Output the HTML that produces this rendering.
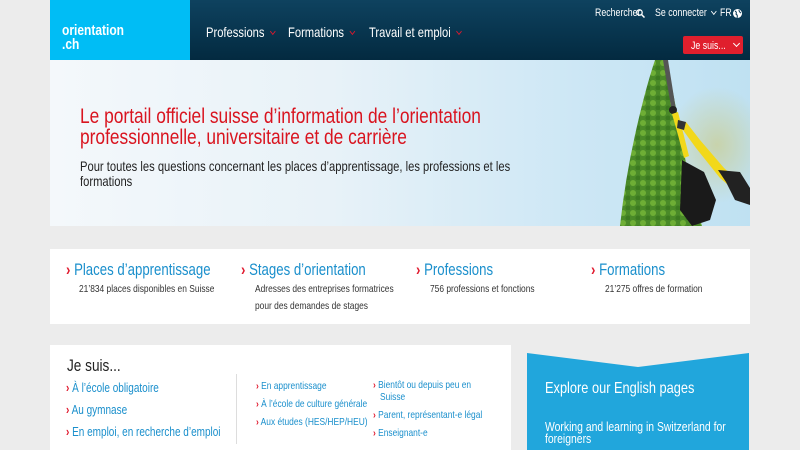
<!DOCTYPE html>
<html><head><meta charset="utf-8"><style>
*{margin:0;padding:0;box-sizing:border-box}
body{width:800px;height:450px;overflow:hidden;background:#ececec;font-family:"Liberation Sans",sans-serif;position:relative}
.abs{position:absolute}
.n{transform:scaleX(.8);transform-origin:0 0;white-space:nowrap}
.hdr{left:50px;top:0;width:700px;height:60px;background:linear-gradient(#0e425f,#032a40)}
.logo{left:50px;top:0;width:140px;height:68px;background:#00bdf5;clip-path:polygon(0 0,100% 0,100% 60px,50% 68px,0 60px)}
.logot{left:62px;top:24px;color:#fff;font-weight:bold;font-size:15px;line-height:14px}
.nav{color:#fff;font-size:14px;top:24px}
.nav i{display:inline-block;width:5px;height:5px;border-right:1.5px solid #e0182d;border-bottom:1.5px solid #e0182d;transform:rotate(45deg);margin:0 0 3px 8px}
.top{color:#fff;font-size:11px;top:7px}
.w{display:inline-block;width:5px;height:5px;border-right:1px solid #fff;border-bottom:1px solid #fff;transform:rotate(45deg);margin:0 0 2px 6px}
.btn{left:683px;top:36px;width:60px;height:18px;background:#e01f2d;border-radius:2px}
.hero{left:50px;top:60px;width:700px;height:166px;background:linear-gradient(90deg,#f4f8fb 0%,#e8f2f8 40%,#cde7f5 75%,#bfe1f2 100%)}
h1{left:80px;top:105px;color:#d9141f;font-weight:normal;font-size:21.7px;line-height:21px}
.sub{left:80px;top:159px;color:#222;font-size:14px;line-height:15px}
.card{background:#fff}
.l{color:#1a8fcc}
.r{color:#e0182d;font-weight:bold}
.ct{font-size:16.5px;top:261px}
.cs{font-size:10.5px;color:#333;line-height:17px;top:281px}
.js a{display:block;color:#1a8fcc;text-decoration:none}
</style></head><body>
<div class="abs hdr"></div>
<div class="abs logo"></div>
<div class="abs logot n">orientation<br>.ch</div>
<div class="abs nav n" style="left:206px">Professions<i></i></div>
<div class="abs nav n" style="left:288px">Formations<i></i></div>
<div class="abs nav n" style="left:369px">Travail et emploi<i></i></div>
<div class="abs top n" style="left:595px">Rechercher</div>
<svg class="abs" style="left:636px;top:9px" width="9" height="9"><circle cx="3.5" cy="3.5" r="2.7" stroke="#fff" stroke-width="1.3" fill="none"/><path d="M5.5 5.5L8.5 8.5" stroke="#fff" stroke-width="1.5"/></svg>
<div class="abs top n" style="left:655px">Se connecter<span class="w"></span></div>
<div class="abs top n" style="left:720px">FR</div>
<svg class="abs" style="left:733px;top:9px" width="9" height="9"><circle cx="4.5" cy="4.5" r="4.5" fill="#fff"/><path d="M2 2Q4 3 3 5Q5 6 4 9M6 1Q6 3 8 4" stroke="#0b3a56" stroke-width="1" fill="none"/></svg>
<div class="abs btn"></div>
<div class="abs n" style="left:691px;top:40px;color:#fff;font-size:11px">Je suis...</div>
<span class="abs w" style="left:728px;top:41px"></span>
<div class="abs hero"></div>
<svg class="abs" style="left:600px;top:60px" width="150" height="166">
<defs><radialGradient id="bg" cx="0.7" cy="0.5" r="0.45"><stop offset="0" stop-color="#c9cf9a" stop-opacity=".8"/><stop offset="1" stop-color="#c9cf9a" stop-opacity="0"/></radialGradient>
<pattern id="lf" width="10" height="10" patternUnits="userSpaceOnUse"><rect width="10" height="10" fill="#4a8a28"/><circle cx="3" cy="3" r="3" fill="#6eae35"/><circle cx="8" cy="8" r="2.5" fill="#3c7a20"/></pattern></defs>
<rect x="40" y="20" width="110" height="130" fill="url(#bg)"/>
<path d="M55 0 L66 0 Q75 40 82 80 Q88 120 102 166 L20 166 Q25 120 35 75 Q45 30 55 0Z" fill="url(#lf)"/>
<path d="M63 0 L68 0 L76 50 L72 52Z" fill="#555"/>
<circle cx="73" cy="50" r="4" fill="#222"/>
<path d="M72 54 L78 75 L84 98 L89 96 L83 72 L78 52Z" fill="#f2d81a"/>
<path d="M80 66 L96 88 L120 118 L148 142 L150 132 L124 108 L100 80 L86 62Z" fill="#f2d81a"/>
<path d="M78 60 L86 62 L84 70 L77 68Z" fill="#333"/>
<path d="M82 100 L104 112 L116 140 L110 160 L92 166 L80 150Z" fill="#1a1a1a"/>
<path d="M118 110 L140 112 L150 128 L150 145 L135 140 L126 122Z" fill="#222"/>
</svg>
<h1 class="abs n">Le portail officiel suisse d’information de l’orientation<br>professionnelle, universitaire et de carrière</h1>
<div class="abs sub n">Pour toutes les questions concernant les places d’apprentissage, les professions et les<br>formations</div>
<div class="abs card" style="left:50px;top:249px;width:700px;height:75px"></div>
<div class="abs ct n" style="left:66px"><span class="r">›</span> <span class="l">Places d’apprentissage</span></div>
<div class="abs cs n" style="left:79px">21’834 places disponibles en Suisse</div>
<div class="abs ct n" style="left:241px"><span class="r">›</span> <span class="l">Stages d’orientation</span></div>
<div class="abs cs n" style="left:255px">Adresses des entreprises formatrices<br>pour des demandes de stages</div>
<div class="abs ct n" style="left:416px"><span class="r">›</span> <span class="l">Professions</span></div>
<div class="abs cs n" style="left:430px">756 professions et fonctions</div>
<div class="abs ct n" style="left:591px"><span class="r">›</span> <span class="l">Formations</span></div>
<div class="abs cs n" style="left:605px">21’275 offres de formation</div>
<div class="abs card" style="left:50px;top:345px;width:461px;height:105px"></div>
<div class="abs n" style="left:67px;top:356px;font-size:17px;color:#222">Je suis...</div>
<div class="abs js n" style="left:66px;top:377px;font-size:12.5px;line-height:22px">
<a><span class="r">›</span> À l’école obligatoire</a><a><span class="r">›</span> Au gymnase</a><a><span class="r">›</span> En emploi, en recherche d’emploi</a></div>
<div class="abs" style="left:236px;top:374px;width:1px;height:70px;background:#ddd"></div>
<div class="abs js n" style="left:256px;top:377px;font-size:10.5px;line-height:18px">
<a><span class="r">›</span> En apprentissage</a><a><span class="r">›</span> À l’école de culture générale</a><a><span class="r">›</span> Aux études (HES/HEP/HEU)</a></div>
<div class="abs js n" style="left:373px;top:379px;font-size:10.5px;line-height:12px">
<a><span class="r">›</span> Bientôt ou depuis peu en<br>&nbsp;&nbsp;&nbsp;Suisse</a><a style="margin-top:6px"><span class="r">›</span> Parent, représentant-e légal</a><a style="margin-top:6px"><span class="r">›</span> Enseignant-e</a></div>
<div class="abs" style="left:527px;top:353px;width:222px;height:97px;background:#21a6dc;clip-path:polygon(0 0,50% 14px,100% 0,100% 100%,0 100%)"></div>
<div class="abs n" style="left:545px;top:380px;color:#fff;font-size:16px">Explore our English pages</div>
<div class="abs n" style="left:545px;top:421px;color:#fff;font-size:13px;line-height:12px">Working and learning in Switzerland for<br>foreigners</div>
</body></html>
